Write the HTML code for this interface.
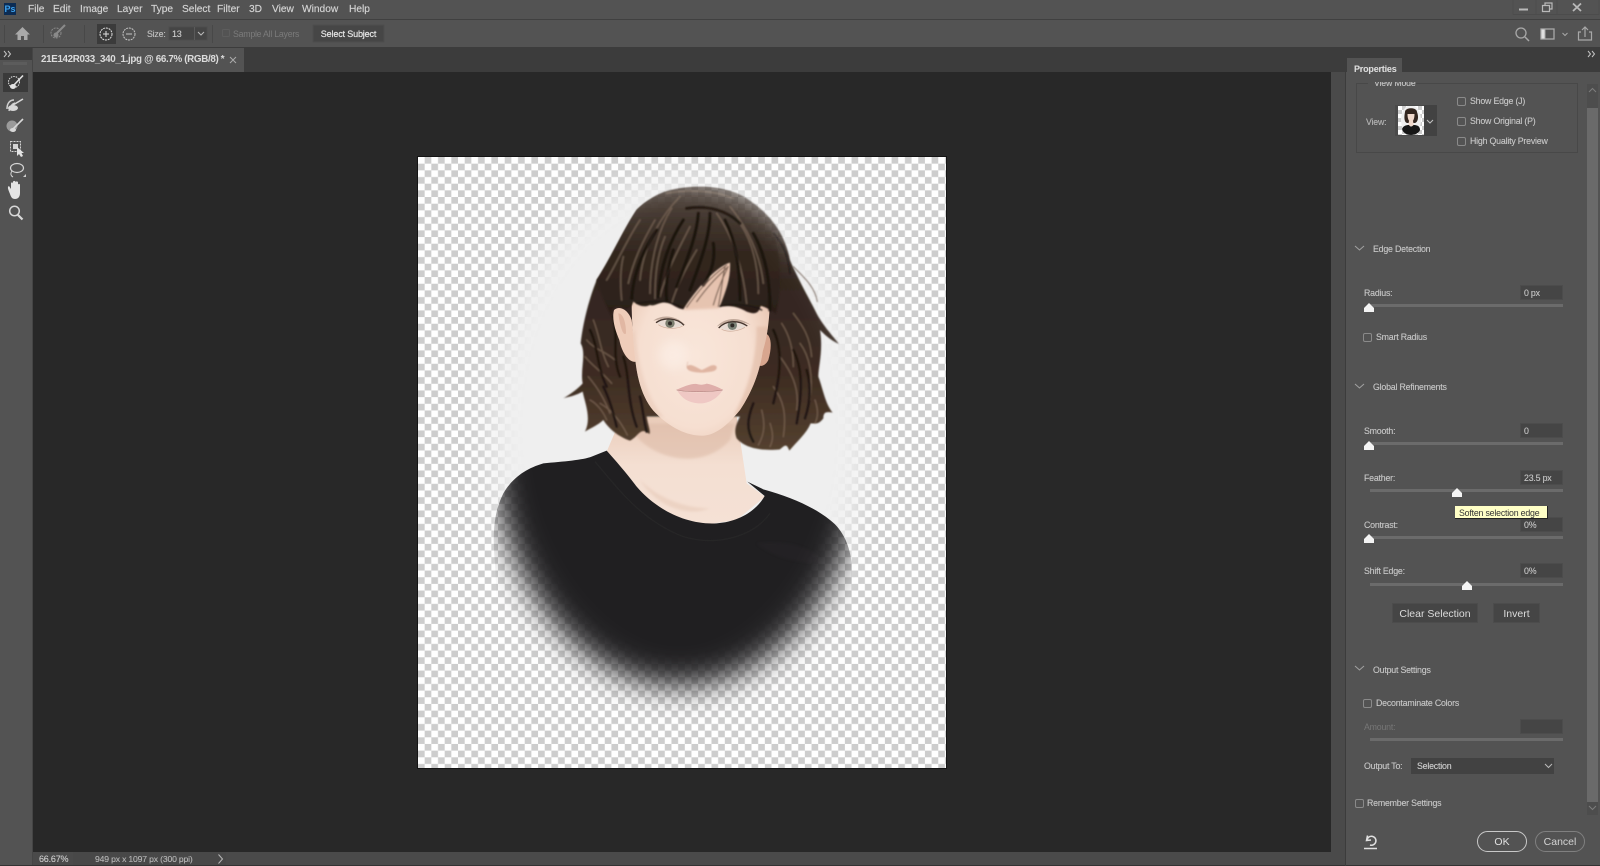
<!DOCTYPE html>
<html><head><meta charset="utf-8"><title>Photoshop</title>
<style>
html,body{margin:0;padding:0;width:1600px;height:866px;overflow:hidden;background:#535353}
body{font-family:"Liberation Sans",sans-serif;position:relative}
.b{position:absolute}
.t{position:absolute;white-space:nowrap;line-height:12px;font-size:8.8px;color:#c9c9c9;letter-spacing:-.2px;-webkit-text-stroke:.1px #c9c9c9}
.m{font-size:10.2px;color:#d4d4d4;letter-spacing:0;-webkit-text-stroke:.15px #d4d4d4;margin-top:1px}
.in{position:absolute;left:1520px;width:41px;height:13px;background:#454545;border:1px solid #4c4c4c}
.s{position:absolute;left:1370px;width:193px;height:3px;background:#6b6b6b}
.c{position:absolute;width:7px;height:7px;border:1px solid #8a8a8a;border-radius:2px}
.bt{position:absolute;background:#454545;border:1px solid #4c4c4c;color:#dcdcdc;font-size:10.5px;text-align:center;box-sizing:border-box}
svg{position:absolute;overflow:visible}
</style></head><body>

<!-- regions -->
<div class="b" style="left:0;top:19px;width:1600px;height:1px;background:#404040"></div>
<div class="b" style="left:0;top:47px;width:1600px;height:25px;background:#3c3c3c"></div>
<div class="b" style="left:0;top:60px;width:33px;height:806px;background:#535353"></div>
<div class="b" style="left:32px;top:48px;width:1px;height:818px;background:#454545"></div>
<div class="b" style="left:33px;top:48px;width:211px;height:24px;background:#535353"></div>
<div class="b" style="left:33px;top:72px;width:1298px;height:780px;background:#282828"></div>
<div class="b" style="left:1331px;top:72px;width:14px;height:780px;background:#4a4a4a"></div>
<div class="b" style="left:33px;top:852px;width:1312px;height:13px;background:#4a4a4a"></div>
<div class="b" style="left:73px;top:852px;width:153px;height:13px;background:#484848"></div>
<div class="b" style="left:0;top:865px;width:1600px;height:1px;background:#333"></div>
<div class="b" style="left:1345px;top:48px;width:1px;height:818px;background:#3c3c3c"></div>
<div class="b" style="left:1346px;top:82px;width:254px;height:783px;background:#535353"></div>
<div class="b" style="left:1347px;top:58px;width:55px;height:24px;background:#535353"></div>

<!-- canvas -->
<svg style="left:0;top:0" width="1600" height="866" viewBox="0 0 1600 866">
<defs>
<pattern id="ck" x="418" y="157" width="13.34" height="13.34" patternUnits="userSpaceOnUse">
<rect width="13.34" height="13.34" fill="#fff"/><rect x="6.67" width="6.67" height="6.67" fill="#cdcdcd"/><rect y="6.67" width="6.67" height="6.67" fill="#cdcdcd"/>
</pattern>
<filter id="fe" x="-30%" y="-30%" width="160%" height="160%"><feGaussianBlur stdDeviation="16"/></filter>
<filter id="b1"><feGaussianBlur stdDeviation="1"/></filter>
<filter id="b2" x="-10%" y="-10%" width="120%" height="120%"><feGaussianBlur stdDeviation="2.4"/></filter>
<filter id="b3" x="-30%" y="-30%" width="160%" height="160%"><feGaussianBlur stdDeviation="4"/></filter>
<filter id="b8" x="-60%" y="-60%" width="220%" height="220%"><feGaussianBlur stdDeviation="16"/></filter>
<mask id="mk" maskUnits="userSpaceOnUse" x="418" y="157" width="528" height="611">
<rect x="418" y="157" width="528" height="611" fill="#000"/>
<ellipse cx="679" cy="431" rx="188" ry="255" fill="#fff" filter="url(#fe)"/>
</mask>
<clipPath id="cv"><rect x="418" y="157" width="528" height="611"/></clipPath>
<clipPath id="fc"><path d="M278 260L690 260C695 440 682 500 668 545C660 600 640 660 600 720C560 770 520 800 480 797C430 795 380 765 340 722C305 680 290 620 285 560C278 500 270 400 278 260Z"/></clipPath>
<radialGradient id="sk" cx=".46" cy=".55" r=".62"><stop offset="0" stop-color="#f9e6da"/><stop offset=".65" stop-color="#f6dfd1"/><stop offset="1" stop-color="#e8c5b1"/></radialGradient>
<linearGradient id="nk" x1="0" y1="0" x2="0" y2="1"><stop offset="0" stop-color="#e9cbb9"/><stop offset=".45" stop-color="#f4dfd2"/><stop offset="1" stop-color="#f5e1d5"/></linearGradient>
<linearGradient id="hr" x1="0" y1="0" x2="0" y2="1"><stop offset="0" stop-color="#544840"/><stop offset=".35" stop-color="#32261f"/><stop offset=".7" stop-color="#3c2b21"/><stop offset="1" stop-color="#54402f"/></linearGradient>
<linearGradient id="hf" x1="0" y1="0" x2="0" y2="1"><stop offset="0" stop-color="#51453d"/><stop offset=".5" stop-color="#33271f"/><stop offset="1" stop-color="#2a1e18"/></linearGradient>
</defs>
<rect x="417.500" y="156.500" width="529" height="612" fill="none" stroke="#141414"/>
<rect x="418" y="157" width="528" height="611" fill="url(#ck)"/>
<g clip-path="url(#cv)"><g mask="url(#mk)">
<rect x="418" y="157" width="528" height="611" fill="#efefef"/>

<!-- neck -->
<g transform="translate(470 430) scale(.33333)">
<path fill="url(#nk)" d="M455 -40L800 -40L830 160L885 200L800 270L700 285L560 240L410 65Z"/>
<path fill="#dcb9a5" opacity=".55" filter="url(#b3)" d="M500 20C560 90 700 120 780 30L795 -20L480 -20Z"/>
<path fill="#e0bfab" opacity=".4" filter="url(#b3)" d="M510 150C560 200 640 235 720 235C650 262 560 230 510 150Z"/>
</g>

<!-- head -->
<g transform="translate(540 170) scale(.33333)">
<g filter="url(#b2)">
<path fill="url(#hr)" d="M400 58C460 45 560 45 620 85C690 130 735 190 750 270C770 320 810 390 835 440C860 480 880 500 897 522C870 510 850 490 840 480C850 540 835 590 835 620C850 660 855 700 878 728C860 725 850 725 850 745C835 765 825 760 812 760C800 790 770 815 748 842C740 820 735 825 720 838C680 842 620 840 590 805C580 780 590 760 600 740L320 740C325 770 333 785 328 792C300 770 300 795 270 812C235 800 205 775 190 750C175 765 150 775 135 785C155 745 135 700 128 665C100 680 85 680 70 685C95 670 115 655 128 640C120 600 140 550 122 520C130 450 150 380 170 330C210 270 250 180 290 120C320 90 360 65 400 58Z"/>
<g fill="none" stroke-linecap="round">
<g stroke="#816a58" stroke-width="4" opacity=".7">
<path d="M135 560C160 590 180 600 215 640"/><path d="M145 620C170 650 190 680 210 730"/><path d="M160 450C180 500 180 540 205 590"/><path d="M180 700C215 720 240 750 262 795"/><path d="M140 510C165 540 190 540 225 570"/><path d="M150 690C170 700 190 725 200 750"/>
<path d="M720 560C750 600 780 650 770 720"/><path d="M700 650C730 690 740 730 730 800"/><path d="M780 520C810 560 820 620 810 690"/><path d="M665 720C675 760 675 790 655 825"/><path d="M760 430C790 470 810 500 815 560"/><path d="M825 690C835 720 835 740 825 760"/><path d="M725 460C745 490 760 530 760 590"/><path d="M690 760C700 790 700 810 690 830"/>
</g>
<g stroke="#1a120e" stroke-width="8" opacity=".8">
<path d="M150 480C175 530 170 590 200 650"/><path d="M250 560C270 620 260 690 290 770"/><path d="M700 480C730 540 720 620 700 700"/><path d="M760 540C785 590 790 650 770 760"/><path d="M640 700C620 750 620 780 640 815"/><path d="M190 650C210 690 220 730 230 770"/><path d="M220 440C235 500 215 560 240 620"/><path d="M800 600C815 650 810 700 795 745"/><path d="M300 680C310 720 310 750 320 785"/>
</g></g>
</g>
<!-- ear -->
<path fill="#efcdba" d="M222 420C240 405 265 420 275 450L290 575C265 580 245 545 238 510C225 480 215 445 222 420Z"/>
<path fill="#d7a994" opacity=".6" d="M235 430C250 430 258 460 258 490C250 500 240 470 235 430Z"/>
<path fill="#d8a68f" d="M672 490C695 490 697 530 685 570C675 590 660 590 650 585Z"/>
<!-- face -->
<path fill="url(#sk)" d="M278 260L690 260C695 440 682 500 668 545C660 600 640 660 600 720C560 770 520 800 480 797C430 795 380 765 340 722C305 680 290 620 285 560C278 500 270 400 278 260Z"/>
<g clip-path="url(#fc)">
<path fill="#dfb8a2" opacity=".55" filter="url(#b3)" d="M650 470C650 560 630 640 585 730L600 760L690 640L700 470Z"/>
<path fill="#e8c7b5" opacity=".45" filter="url(#b3)" d="M285 480C295 590 320 680 370 740L300 740L270 500Z"/>
<ellipse cx="400" cy="555" rx="45" ry="45" fill="#fff8f3" opacity=".4" filter="url(#b8)"/>
<path fill="#e3bda8" filter="url(#b3)" d="M430 420C470 350 520 300 570 280L560 380L535 415Z" opacity=".8"/>
</g>
<!-- eyes -->
<g filter="url(#b1)">
<path fill="#9d8375" opacity=".6" d="M340 452C365 432 410 435 437 466C405 445 370 445 340 452Z"/>
<path fill="#9d8375" opacity=".6" d="M530 470C555 440 600 440 632 465C600 450 560 455 530 470Z"/>
<path fill="#e8dcd4" d="M350 458C370 445 410 445 430 465C405 478 370 475 350 458Z"/>
<path fill="#e8dcd4" d="M538 473C560 452 595 452 620 468C595 484 560 486 538 473Z"/>
<circle cx="390" cy="460" r="14" fill="#7a7d6e"/><circle cx="390" cy="460" r="6" fill="#2e2b28"/>
<circle cx="577" cy="466" r="14" fill="#7b8378"/><circle cx="577" cy="466" r="6" fill="#2e2b28"/>
<path fill="none" stroke="#45352d" stroke-width="4" d="M348 458C370 442 410 442 432 466"/>
<path fill="none" stroke="#45352d" stroke-width="4" d="M536 474C558 450 595 450 622 468"/>
<path fill="none" stroke="#cfae9c" stroke-width="2" d="M355 464C375 478 410 478 428 468"/>
<path fill="none" stroke="#cfae9c" stroke-width="2" d="M545 478C565 488 595 484 615 472"/>
</g>
<!-- nose -->
<g filter="url(#b2)">
<path fill="#d9a995" opacity=".8" d="M440 590C450 578 465 590 485 600C505 592 520 578 530 590C532 605 515 605 490 608C465 608 440 605 440 590Z"/>
<path fill="none" stroke="#d3a995" stroke-width="2" opacity=".6" d="M444 575C440 585 440 595 448 600"/>
</g>
<!-- lips -->
<g filter="url(#b1)">
<path fill="#efc8c4" d="M412 662C440 670 515 668 548 660C530 690 500 702 475 700C445 698 425 685 412 662Z"/>
<path fill="#dfaeaa" d="M408 660C430 650 455 640 470 642C480 645 490 645 500 641C520 645 535 652 550 660C515 666 440 668 408 660Z"/>
<path fill="none" stroke="#ab7a78" stroke-width="1.500" d="M410 660C445 668 515 666 548 660"/>
</g>
<!-- front hair -->
<g filter="url(#b2)">
<path fill="url(#hf)" d="M290 120C340 70 420 50 500 52C590 55 660 110 705 200C722 260 728 340 708 432C695 425 680 410 662 408C655 435 640 432 620 425C590 408 565 405 538 412C560 360 572 320 570 278C540 285 480 340 430 418C405 415 400 400 375 398C360 395 345 410 330 405C315 412 298 410 280 395C272 420 258 420 240 410C222 405 215 420 215 440C205 420 180 370 170 330C210 270 250 180 290 120Z"/>
<g fill="none" stroke-linecap="round">
<g stroke="#7a6656" stroke-width="5" opacity=".7">
<path d="M420 80C370 130 310 220 300 330"/><path d="M395 115C360 170 330 260 330 370"/><path d="M450 170C420 230 380 300 360 380"/><path d="M300 150C260 210 230 280 200 330"/><path d="M570 110C620 170 660 250 670 340"/><path d="M530 130C580 200 610 300 620 400"/><path d="M470 240C440 290 410 350 395 400"/><path d="M250 260C240 300 240 340 245 390"/><path d="M380 70C440 58 520 60 580 85"/>
<path d="M345 150C310 210 280 270 265 340"/><path d="M600 160C640 220 655 290 655 370"/><path d="M375 200C350 260 345 320 345 385"/>
</g>
<g stroke="#171009" stroke-width="10" opacity=".8">
<path d="M440 115C500 105 560 120 600 160"/><path d="M475 130C470 200 440 270 410 350"/><path d="M510 130C510 200 480 280 450 360"/><path d="M555 150C590 220 600 300 600 390"/><path d="M430 150C390 210 360 290 355 380"/><path d="M640 190C680 260 690 340 690 420"/><path d="M350 180C310 240 280 310 275 385"/><path d="M520 220C525 260 520 300 490 345"/><path d="M400 240C385 290 375 340 380 390"/>
</g>
<g stroke="#1b1310" stroke-width="4" opacity=".9">
<path d="M700 190C730 220 745 260 750 310"/><path d="M290 400C330 395 380 385 425 412"/><path d="M540 408C580 400 640 405 665 420"/>
</g>
<g stroke="#5a463a" stroke-width="3" opacity=".8"><path d="M760 290C790 320 825 350 832 395"/><path d="M535 410C545 360 548 320 555 290"/><path d="M440 412C470 370 500 330 560 285"/><path d="M470 395C495 360 520 330 565 290"/><path d="M520 405C530 370 545 330 562 295"/></g>
</g>
</g>
</g>

<!-- shirt -->
<g transform="translate(470 430) scale(.33333)">
<path fill="#201f21" d="M410 62L365 80C340 90 280 95 220 100C170 115 130 140 100 190C75 240 65 300 75 400L100 1000L1150 1000L1145 400C1140 350 1120 300 1080 270C1030 230 960 200 880 178L832 155L884 198C860 240 810 275 740 280C650 285 560 240 500 170C470 130 435 90 410 62Z"/>
<path fill="none" stroke="#262527" stroke-width="4" filter="url(#b1)" d="M375 95C440 170 510 270 640 320C740 350 850 320 900 250"/>
<path fill="#29282a" opacity=".35" filter="url(#b3)" d="M860 340C950 330 1030 350 1060 400C1000 400 920 390 860 340Z"/>
</g>
</g></g>
</svg>

<!-- title bar -->
<div class="b" style="left:4px;top:3px;width:12px;height:12px;background:#0c2c54;color:#3da3ef;font:bold 9px/12px 'Liberation Sans',sans-serif;text-align:center">Ps</div>
<div class="t m" style="left:28px;top:3px">File</div>
<div class="t m" style="left:53px;top:3px">Edit</div>
<div class="t m" style="left:80px;top:3px">Image</div>
<div class="t m" style="left:117px;top:3px">Layer</div>
<div class="t m" style="left:151px;top:3px">Type</div>
<div class="t m" style="left:182px;top:3px">Select</div>
<div class="t m" style="left:217px;top:3px">Filter</div>
<div class="t m" style="left:249px;top:3px">3D</div>
<div class="t m" style="left:272px;top:3px">View</div>
<div class="t m" style="left:302px;top:3px">Window</div>
<div class="t m" style="left:349px;top:3px">Help</div>

<!-- window controls -->
<svg style="left:1512px;top:0" width="88" height="15" fill="none" stroke="#b9b9b9">
<path d="M1 14.500H87V0" stroke="#4c4c4c"/><path d="M1 0V14.500M24 0V14.500M45 0V14.500" stroke="#4c4c4c"/>
<path d="M7 9.500H16" stroke-width="2"/>
<path d="M30.500 5.500H37.500V11.500H30.500ZM33 5V3H40V9H38" stroke-width="1.200"/>
<path d="M61 3.500L69 11M69 3.500L61 11" stroke-width="1.800"/>
</svg>

<!-- options bar -->
<svg style="left:0;top:20px" width="400" height="28" fill="none">
<path d="M4.500 5V23M43.500 5V23M84.500 5V23M212.500 5V23" stroke="#484848"/>
<rect x="97" y="4" width="19" height="20" fill="#3b3b3b"/>
<path d="M15 14.500L22.500 7L30 14.500H27.500V20H24V16H21V20H17.500V14.500Z" fill="#a9a9a9"/>
<circle cx="56" cy="13" r="5" stroke="#8a8a8a" stroke-dasharray="2 1"/><path d="M54 16L65 5" stroke="#8a8a8a" stroke-width="2"/><circle cx="56" cy="15" r="2.500" fill="#8a8a8a"/>
<circle cx="106" cy="14" r="6" stroke="#e0e0e0" stroke-dasharray="2 .8"/><path d="M103 14H109M106 11V17" stroke="#e0e0e0"/>
<circle cx="129" cy="14" r="6" stroke="#c4c4c4" stroke-dasharray="2 .8"/><path d="M126 14H132" stroke="#c4c4c4"/>
<rect x="169" y="7" width="38" height="13" fill="#454545" stroke="#4c4c4c"/><path d="M194.500 7V20" stroke="#5a5a5a"/>
<path d="M198 12L201 15L204 12" stroke="#bbb"/>
<rect x="222.500" y="9.500" width="7" height="7" stroke="#5d5d5d" rx="1"/>
<rect x="313" y="5" width="71" height="17" fill="#464646" stroke="#4d4d4d"/>
</svg>
<div class="t" style="left:147px;top:28px;color:#c2c2c2">Size:</div>
<div class="t" style="left:172px;top:28px;color:#d0d0d0;font-size:9px">13</div>
<div class="t" style="left:233px;top:28px;color:#7b7b7b;-webkit-text-stroke:0;letter-spacing:-.25px">Sample All Layers</div>
<div class="t" style="left:313px;top:28px;width:71px;text-align:center;color:#e6e6e6;font-size:9px;letter-spacing:-.15px;-webkit-text-stroke:.2px #e6e6e6">Select Subject</div>

<!-- options right icons -->
<svg style="left:1510px;top:24px" width="80" height="20" fill="none" stroke="#a8a8a8">
<circle cx="11" cy="9" r="5" stroke-width="1.300"/><path d="M15 13L19 17" stroke-width="1.500"/>
<rect x="31" y="5" width="13" height="10" stroke-width="1.300"/><rect x="31" y="5" width="4" height="10" fill="#e0e0e0"/>
<path d="M52.500 9L55 11.500L57.500 9"/>
<path d="M75 3V13M72 6L75 3L78 6M71 8H68.500V16H81.500V8H79" stroke-width="1.200"/>
</svg>

<!-- left strip / tab -->
<svg style="left:3px;top:50px" width="10" height="8" fill="none" stroke="#c4c4c4"><path d="M1 1L3.500 4L1 7M5 1L7.500 4L5 7"/></svg>
<div class="b" style="left:3px;top:62px;width:24px;height:3px;background:#5c5c5c"></div>
<svg style="left:1587px;top:50px" width="10" height="8" fill="none" stroke="#c4c4c4"><path d="M1 1L3.500 4L1 7M5 1L7.500 4L5 7"/></svg>
<div class="t" style="left:41px;top:54px;color:#dcdcdc;font-size:9.800px;font-weight:bold;letter-spacing:-.33px;-webkit-text-stroke:0">21E142R033_340_1.jpg @ 66.7% (RGB/8) *</div>
<svg style="left:229px;top:56px" width="8" height="8" fill="none" stroke="#aaa"><path d="M1 1L7 7M7 1L1 7"/></svg>

<!-- tools -->
<div class="b" style="left:3px;top:73px;width:25px;height:19px;background:#3a3a3a"></div>
<svg style="left:0;top:72px" width="32" height="160" fill="none">
<circle cx="14" cy="10" r="5.500" stroke="#e2e2e2" stroke-dasharray="1.500 1"/><path d="M13 14L23 3.500" stroke="#e2e2e2" stroke-width="1.600"/><ellipse cx="13" cy="14.500" rx="3" ry="2.500" fill="#e2e2e2"/>
<g transform="translate(0 2)"><path d="M7 35C7 29 10 26 14 26M9 37C10 32 12 30 15 29" stroke="#cfcfcf" stroke-width="1.500"/><path d="M13 31L23 25" stroke="#d8d8d8" stroke-width="1.600"/><ellipse cx="13" cy="34" rx="5" ry="3" fill="#d8d8d8"/></g>
<g transform="translate(0 1)"><circle cx="12" cy="53" r="5.500" fill="#9a9a9a"/><path d="M13 56L23 46" stroke="#d8d8d8" stroke-width="1.600"/><ellipse cx="13" cy="57" rx="3" ry="2" fill="#d8d8d8"/></g>
<g transform="translate(0 -1)"><rect x="10.500" y="70.500" width="10" height="10" stroke="#d4d4d4" stroke-dasharray="2 1"/><rect x="13" y="73" width="5" height="5" fill="#d4d4d4"/><path d="M17 76V85L19 83L21 86L23 85L21.500 82H24Z" fill="#e4e4e4"/></g>
<g transform="translate(0 2)"><ellipse cx="17" cy="94" rx="6.500" ry="4.500" stroke="#d4d4d4" stroke-width="1.200"/><path d="M12 97C10 100 11 102 13 103" stroke="#d4d4d4"/><path d="M26 103L23 103L26 100Z" fill="#cfcfcf"/></g>
<g transform="translate(0 3)"><path d="M10 119C8 114 7 112 9 111L11 114V108.500C11 107 13 107 13 108.500V113V107C13 105.500 15.500 105.500 15.500 107V113V107.500C15.500 106 18 106 18 107.500V113.500V110C18 108.500 20 108.500 20 110V118C20 122 18 124 15 124C12 124 11 122 10 119Z" fill="#e4e4e4"/></g>
<circle cx="14.500" cy="139" r="4.800" stroke="#d8d8d8" stroke-width="1.500"/><path d="M18 143L22.500 147.500" stroke="#d8d8d8" stroke-width="2.200"/>
</svg>

<!-- status bar -->
<div class="t" style="left:39px;top:853px;color:#d0d0d0;font-size:9px">66.67%</div>
<div class="t" style="left:95px;top:853px;color:#b4b4b4;font-size:8.600px;letter-spacing:-.16px">949 px x 1097 px (300 ppi)</div>
<svg style="left:217px;top:853px" width="8" height="12" fill="none" stroke="#b8b8b8"><path d="M1.500 1.500L5.500 6L1.500 10.500"/></svg>

<!-- properties -->
<div class="t" style="left:1354px;top:63px;margin-top:0;color:#dedede;font-size:9px;font-weight:bold;letter-spacing:-.2px">Properties</div>
<div class="b" style="left:1356px;top:83px;width:222px;height:70px;border:1px solid #484848;box-sizing:border-box"></div>
<div class="b" style="left:1368px;top:83px;width:46px;height:2px;background:#535353"></div>
<div class="b" style="left:1374px;top:82px;width:60px;height:7px;overflow:hidden"><div class="t" style="left:0;top:-5px">View Mode</div></div>
<div class="t" style="left:1366px;top:116px;color:#b4b4b4">View:</div>
<svg style="left:1395px;top:105px" width="45" height="32">
<defs><pattern id="ck2" width="8" height="8" patternUnits="userSpaceOnUse" x="3" y="1"><rect width="8" height="8" fill="#fff"/><rect x="4" width="4" height="4" fill="#ccc"/><rect y="4" width="4" height="4" fill="#ccc"/></pattern>
<clipPath id="tc"><rect x="3" y="1" width="26" height="29"/></clipPath></defs>
<rect x="0" y="0" width="42" height="31" fill="#4a4a4a"/>
<rect x="29" y="0" width="13" height="31" fill="#424242"/>
<rect x="3" y="1" width="26" height="29" fill="url(#ck2)"/>
<g clip-path="url(#tc)">
<ellipse cx="16" cy="15" rx="10" ry="15" fill="#efefef"/>
<path d="M10 7C10 2 22 2 22 7C24 12 23 17 20 18L12 18C9 17 9 12 10 7Z" fill="#33261f"/>
<path d="M12.500 9H19.500C19.500 14 18 17 16 17C14 17 12.500 14 12.500 9Z" fill="#f0d9cc"/>
<path d="M14 16H18L19 21H13Z" fill="#f0d9cc"/>
<path d="M7 24C8 21 11 20 14 20C15 22 17 22 18.500 20C22 20 25 21 25 25C24 28 20 30 16 30C12 30 8 28 7 24Z" fill="#161616"/>
</g>
<path d="M32 15L35 18L38 15" fill="none" stroke="#c4c4c4"/>
</svg>
<div class="c" style="left:1457px;top:97px"></div><div class="t" style="left:1470px;top:95px">Show Edge (J)</div>
<div class="c" style="left:1457px;top:117px"></div><div class="t" style="left:1470px;top:115px">Show Original (P)</div>
<div class="c" style="left:1457px;top:137px"></div><div class="t" style="left:1470px;top:135px">High Quality Preview</div>

<!-- scrollbar -->
<div class="b" style="left:1587px;top:84px;width:11px;height:731px;background:#4d4d4d"></div>
<div class="b" style="left:1587px;top:108px;width:11px;height:694px;background:#6a6a6a"></div>
<svg style="left:1587px;top:86px" width="11" height="8" fill="none" stroke="#7d7d7d"><path d="M2 6L5.500 2.500L9 6"/></svg>
<svg style="left:1587px;top:804px" width="11" height="8" fill="none" stroke="#7d7d7d"><path d="M2 2L5.500 5.500L9 2"/></svg>

<!-- chevrons + section labels -->
<svg style="left:1354px;top:240px" width="12" height="440" fill="none" stroke="#a2a2a2">
<path d="M1 6L5.500 10L10 6"/><path d="M1 144L5.500 148L10 144"/><path d="M1 426L5.500 430L10 426"/>
</svg>
<div class="t" style="left:1373px;top:243px">Edge Detection</div>
<div class="t" style="left:1373px;top:381px">Global Refinements</div>
<div class="t" style="left:1373px;top:664px">Output Settings</div>

<!-- sliders -->
<div class="t" style="left:1364px;top:287px">Radius:</div><div class="in" style="top:285px"></div><div class="t" style="left:1524px;top:287px">0 px</div><div class="s" style="top:304px"></div>
<div class="c" style="left:1363px;top:333px"></div><div class="t" style="left:1376px;top:331px">Smart Radius</div>
<div class="t" style="left:1364px;top:425px">Smooth:</div><div class="in" style="top:423px"></div><div class="t" style="left:1524px;top:425px">0</div><div class="s" style="top:442px"></div>
<div class="t" style="left:1364px;top:472px">Feather:</div><div class="in" style="top:470px"></div><div class="t" style="left:1524px;top:472px">23.5 px</div><div class="s" style="top:489px"></div>
<div class="t" style="left:1364px;top:519px">Contrast:</div><div class="in" style="top:517px"></div><div class="t" style="left:1524px;top:519px">0%</div><div class="s" style="top:536px"></div>
<div class="t" style="left:1364px;top:565px">Shift Edge:</div><div class="in" style="top:563px"></div><div class="t" style="left:1524px;top:565px">0%</div><div class="s" style="top:583px"></div>
<svg style="left:0;top:0" width="1600" height="866" fill="#f4f4f4">
<path d="M1369 303L1374 308V312H1364V308Z"/>
<path d="M1369 441L1374 446V450H1364V446Z"/>
<path d="M1457 488L1462 493V497H1452V493Z"/>
<path d="M1369 534L1374 539V543H1364V539Z"/>
<path d="M1467 581L1472 586V590H1462V586Z"/>
</svg>

<!-- tooltip -->
<div class="b" style="left:1455px;top:506px;width:93px;height:13px;background:#ffffc6;border:1px solid #222;border-width:0 1px 1px 0;box-sizing:border-box"></div>
<div class="t" style="left:1459px;top:507px;color:#333;-webkit-text-stroke:0">Soften selection edge</div>

<!-- buttons -->
<div class="bt" style="left:1392px;top:603px;width:86px;height:20px;line-height:20px">Clear Selection</div>
<div class="bt" style="left:1493px;top:603px;width:47px;height:20px;line-height:20px">Invert</div>

<!-- output -->
<div class="c" style="left:1363px;top:699px"></div><div class="t" style="left:1376px;top:697px">Decontaminate Colors</div>
<div class="t" style="left:1364px;top:721px;color:#767676;-webkit-text-stroke:0">Amount:</div><div class="in" style="top:719px"></div><div class="s" style="top:738px"></div>
<div class="t" style="left:1364px;top:760px">Output To:</div>
<div class="b" style="left:1411px;top:758px;width:143px;height:16px;background:#424242"></div>
<div class="t" style="left:1417px;top:760px;color:#d4d4d4">Selection</div>
<svg style="left:1544px;top:762px" width="10" height="8" fill="none" stroke="#bbb"><path d="M1 2L4.500 5.500L8 2"/></svg>
<div class="c" style="left:1355px;top:799px"></div><div class="t" style="left:1367px;top:797px">Remember Settings</div>

<!-- bottom -->
<svg style="left:1362px;top:832px" width="18" height="18" fill="none" stroke="#e0e0e0" stroke-width="1.500">
<path d="M2 16.500H15"/><path d="M5 8A4.500 4.500 0 1 1 8 13"/><path d="M5.500 3.500L4.500 8.500L9 8"/>
</svg>
<div class="b" style="left:1477px;top:831px;width:50px;height:21px;border:1px solid #c8c8c8;border-radius:11px;box-sizing:border-box;color:#e0e0e0;font-size:10.500px;line-height:20px;text-align:center">OK</div>
<div class="b" style="left:1535px;top:831px;width:50px;height:21px;border:1px solid #808080;border-radius:11px;box-sizing:border-box;color:#d4d4d4;font-size:10.500px;line-height:20px;text-align:center">Cancel</div>
</body></html>
